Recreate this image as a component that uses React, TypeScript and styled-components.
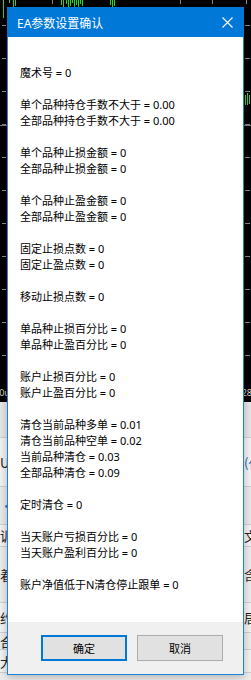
import React from "react";
import styled, { createGlobalStyle } from "styled-components";

const Global = createGlobalStyle`
  html, body { margin: 0; padding: 0; }
  body {
    width: 251px;
    height: 680px;
    overflow: hidden;
    background: #000;
    font-family: "Noto Sans", "Noto Sans CJK SC", sans-serif;
  }
`;

const Page = styled.div`
  position: relative;
  width: 251px;
  height: 680px;
  overflow: hidden;
  display: flex;
  flex-direction: column;
  background: #000;
`;

const ChartSvg = styled.svg`
  display: block;
  flex: none;
`;

const AxisStrip = styled.div`
  flex: none;
  height: 17px;
  background: #000;
  border-bottom: 1px solid #e8e8e8;
  display: flex;
  justify-content: space-between;
  align-items: flex-end;
  font-size: 9px;
  line-height: 12px;
  color: #d8d8d8;
  overflow: hidden;
`;

const AxisLabel = styled.span<{ $side: "left" | "right" }>`
  white-space: nowrap;
  margin-left: ${(p) => (p.$side === "left" ? "-6px" : "0")};
  margin-right: ${(p) => (p.$side === "right" ? "-1px" : "0")};
  padding-bottom: 3px;
`;

const Table = styled.div`
  flex: 1;
  display: flex;
  flex-direction: column;
  background: #eeeeee;
`;

const TableRow = styled.div<{ $h: number; $bg: string }>`
  flex: none;
  height: ${(p) => p.$h - 1}px;
  background: ${(p) => p.$bg};
  border-bottom: 1px solid #cfcfcf;
  display: grid;
  grid-template-columns: 1fr 7px;
  align-items: center;
  font-family: "Noto Sans CJK SC", sans-serif;
  font-size: 13px;
  color: #222;
`;

const Cell = styled.span<{ $color?: string }>`
  white-space: nowrap;
  overflow: hidden;
  color: ${(p) => p.$color || "#222"};
`;

const Dialog = styled.div`
  position: absolute;
  left: 7px;
  top: 7px;
  width: 237px;
  height: 668px;
  box-sizing: border-box;
  border: 1px solid #1d84d8;
  background: #fff;
  display: flex;
  flex-direction: column;
  box-shadow: 0 2px 8px rgba(0, 0, 0, 0.25);
`;

const TitleBar = styled.div`
  flex: none;
  height: 29px;
  background: #0078d7;
  margin: -1px -1px 0 -1px;
  padding: 1px 10px 0 10px;
  display: flex;
  align-items: center;
  justify-content: space-between;
`;

const TitleText = styled.span`
  font-family: "Noto Sans", "Noto Sans CJK SC", sans-serif;
  font-size: 12px;
  color: #fff;
  white-space: nowrap;
`;

const CloseIcon = styled.svg`
  display: block;
  margin-right: 1px;
`;

const Content = styled.div`
  flex: 1;
  background: #fff;
  padding: 28px 12px 0 12px;
  display: flex;
  flex-direction: column;
`;

const Line = styled.div`
  height: 16px;
  line-height: 16px;
  font-size: 11px;
  color: #000;
  white-space: pre;
  font-family: "Noto Sans", "Noto Sans CJK SC", sans-serif;
`;

const Footer = styled.div`
  flex: none;
  height: 52px;
  box-sizing: border-box;
  background: #f0f0f0;
  display: flex;
  justify-content: flex-end;
  align-items: flex-start;
  gap: 10px;
  padding: 13px 20px 0 0;
`;

const Button = styled.button<{ $default?: boolean }>`
  width: 86px;
  height: 26px;
  box-sizing: border-box;
  background: #e1e1e1;
  border: ${(p) => (p.$default ? "2px solid #0078d7" : "1px solid #adadad")};
  font-family: "Noto Sans CJK SC", sans-serif;
  font-size: 11px;
  color: #000;
  padding: 0;
  margin: 0;
  display: flex;
  align-items: center;
  justify-content: center;
`;

const lines: string[] = [
  "魔术号 = 0",
  "",
  "单个品种持仓手数不大于 = 0.00",
  "全部品种持仓手数不大于 = 0.00",
  "",
  "单个品种止损金额 = 0",
  "全部品种止损金额 = 0",
  "",
  "单个品种止盈金额 = 0",
  "全部品种止盈金额 = 0",
  "",
  "固定止损点数 = 0",
  "固定止盈点数 = 0",
  "",
  "移动止损点数 = 0",
  "",
  "单品种止损百分比 = 0",
  "单品种止盈百分比 = 0",
  "",
  "账户止损百分比 = 0",
  "账户止盈百分比 = 0",
  "",
  "清仓当前品种多单 = 0.01",
  "清仓当前品种空单 = 0.02",
  "当前品种清仓 = 0.03",
  "全部品种清仓 = 0.09",
  "",
  "定时清仓 = 0",
  "",
  "当天账户亏损百分比 = 0",
  "当天账户盈利百分比 = 0",
  "",
  "账户净值低于N清仓停止跟单 = 0",
];

const rows = [
  { h: 35, bg: "#e6e6e6", left: "", right: "" },
  { h: 49, bg: "#f2f2f2", left: "U", right: "(仕", rightColor: "#1a5fb4" },
  { h: 38, bg: "#e9e9e9", left: "·", right: "", leftColor: "#1a6fd0" },
  { h: 22, bg: "#f2f2f2", left: "训", right: "文" },
  { h: 56, bg: "#ececec", left: "着", right: "含" },
  { h: 30, bg: "#f2f2f2", left: "约", right: "居" },
  { h: 17, bg: "#ececec", left: "合", right: "" },
  { h: 23, bg: "#f2f2f2", left: "大", right: "" },
  { h: 10, bg: "#ececec", left: "", right: "" },
];

const greenBars: [number, number, number][] = [
  [3, 0, 18],
  [9, 0, 3],
  [13, 0, 7],
  [15, 0, 6],
  [61, 0, 5],
  [63, 0, 7],
  [66, 0, 4],
  [68, 0, 7],
  [70, 0, 6],
  [72, 0, 3],
  [74, 0, 7],
  [76, 0, 5],
  [78, 0, 7],
  [80, 0, 4],
  [82, 0, 6],
  [110, 0, 5],
  [112, 0, 7],
  [114, 0, 6],
  [245, 95, 105],
  [247, 93, 105],
  [249, 95, 104],
];

const tickYs = Array.from({ length: 11 }, (_, i) => 25 + i * 33);

function Chart() {
  return (
    <ChartSvg width="251" height="385" viewBox="0 0 251 385">
      <rect x="0" y="0" width="251" height="385" fill="#000" />
      <line x1="0" y1="125.5" x2="251" y2="125.5" stroke="#7a7a7a" strokeWidth="1" />
      {tickYs.map((y) => (
        <g key={y}>
          <line x1="2" y1={y + 0.5} x2="6" y2={y + 0.5} stroke="#8a8a8a" strokeWidth="1" />
          <line x1="245" y1={y + 0.5} x2="250" y2={y + 0.5} stroke="#8a8a8a" strokeWidth="1" />
        </g>
      ))}
      {[52, 180, 212, 246].map((x) => (
        <line key={x} x1={x + 0.5} y1="0" x2={x + 0.5} y2="4" stroke="#8a8a8a" strokeWidth="1" />
      ))}
      {greenBars.map(([x, y1, y2], i) => (
        <line key={i} x1={x + 0.5} y1={y1} x2={x + 0.5} y2={y2} stroke="#22dd22" strokeWidth="1" />
      ))}
    </ChartSvg>
  );
}

export default function App() {
  return (
    <>
      <Global />
      <Page>
        <Chart />
        <AxisStrip>
          <AxisLabel $side="left">10u</AxisLabel>
          <AxisLabel $side="right">28</AxisLabel>
        </AxisStrip>
        <Table>
          {rows.map((r, i) => (
            <TableRow key={i} $h={r.h} $bg={r.bg}>
              <Cell $color={r.leftColor}>{r.left}</Cell>
              <Cell $color={r.rightColor}>{r.right}</Cell>
            </TableRow>
          ))}
        </Table>
        <Dialog>
          <TitleBar>
            <TitleText>EA参数设置确认</TitleText>
            <CloseIcon width="11" height="11" viewBox="0 0 11 11">
              <path d="M0.5 0.5 L10.5 10.5 M10.5 0.5 L0.5 10.5" stroke="#fff" strokeWidth="1.1" fill="none" />
            </CloseIcon>
          </TitleBar>
          <Content>
            {lines.map((t, i) => (
              <Line key={i}>{t}</Line>
            ))}
          </Content>
          <Footer>
            <Button $default>确定</Button>
            <Button>取消</Button>
          </Footer>
        </Dialog>
      </Page>
    </>
  );
}
